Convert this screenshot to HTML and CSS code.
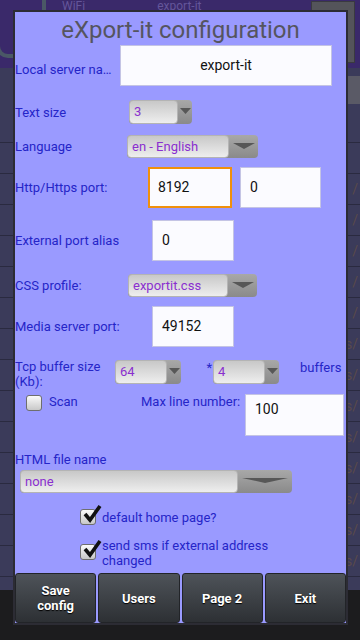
FILE: index.html
```html
<!DOCTYPE html>
<html lang="en">
<head>
  <meta charset="UTF-8">
  <meta name="viewport" content="width=device-width, initial-scale=1.0">
  <title>eXport-it configuration</title>
  <link rel="stylesheet" href="styles.css">
</head>
<body>
  <!-- dimmed app behind the dialog -->
  <div class="screen">
    <div class="app-bar">
      <div class="app-icon"></div>
      <div class="app-titles">
        <span class="app-sub">WiFi</span>
        <span class="app-name">export-it</span>
      </div>
      <div class="app-btn"></div>
    </div>
    <div class="app-list">
      <div class="app-pill-row"><span class="app-pill">p</span></div>
      <div class="app-row"></div>
      <div class="app-row"></div>
      <div class="app-row"><span>/</span></div>
      <div class="app-row"><span>/</span></div>
      <div class="app-row"><span>/</span></div>
      <div class="app-row"><span>/</span></div>
      <div class="app-row"><span>/</span></div>
      <div class="app-row"><span>s/</span></div>
      <div class="app-row"><span>s/</span></div>
      <div class="app-row"><span>s/</span></div>
      <div class="app-row"><span>s/</span></div>
      <div class="app-row"><span>s/</span></div>
      <div class="app-row"><span>s/</span></div>
      <div class="app-row"><span>s/</span></div>
      <div class="app-row"><span>s/</span></div>
    </div>
    <div class="app-foot">
      <span>service</span>
      <span>service</span>
    </div>
  </div>

  <!-- configuration dialog -->
  <div class="dialog">
    <h1 class="dlg-title">eXport-it configuration</h1>

    <div class="row row-name">
      <span class="label lbl-name">Local server na…</span>
      <div class="field field-center w-name">export-it</div>
    </div>

    <div class="row row-size">
      <span class="label lbl-size">Text size</span>
      <div class="spin w-size">
        <span class="spin-val">3</span>
        <span class="spin-arrow">
          <svg viewBox="0 0 12 6" preserveAspectRatio="none"><polygon points="0 0, 12 0, 6 6" /></svg>
        </span>
      </div>
    </div>

    <div class="row row-lang">
      <span class="label lbl-lang">Language</span>
      <div class="spin w-lang">
        <span class="spin-val">en - English</span>
        <span class="spin-arrow arrow-wide">
          <svg viewBox="0 0 12 6" preserveAspectRatio="none"><polygon points="0 0, 12 0, 6 6" /></svg>
        </span>
      </div>
    </div>

    <div class="row row-http">
      <span class="label lbl-http">Http/Https port:</span>
      <div class="field field-focus w-http">8192</div>
      <div class="field w-https">0</div>
    </div>

    <div class="row row-ext">
      <span class="label lbl-ext">External port alias</span>
      <div class="field w-port">0</div>
    </div>

    <div class="row row-css">
      <span class="label lbl-css">CSS profile:</span>
      <div class="spin w-css">
        <span class="spin-val">exportit.css</span>
        <span class="spin-arrow arrow-wide">
          <svg viewBox="0 0 12 6" preserveAspectRatio="none"><polygon points="0 0, 12 0, 6 6" /></svg>
        </span>
      </div>
    </div>

    <div class="row row-media">
      <span class="label lbl-ext">Media server port:</span>
      <div class="field w-port">49152</div>
    </div>

    <div class="row row-tcp">
      <span class="label lbl-tcp">Tcp buffer size (Kb):</span>
      <div class="spin w-tcp">
        <span class="spin-val">64</span>
        <span class="spin-arrow">
          <svg viewBox="0 0 12 6" preserveAspectRatio="none"><polygon points="0 0, 12 0, 6 6" /></svg>
        </span>
      </div>
      <span class="label times">*</span>
      <div class="spin w-tcp">
        <span class="spin-val">4</span>
        <span class="spin-arrow">
          <svg viewBox="0 0 12 6" preserveAspectRatio="none"><polygon points="0 0, 12 0, 6 6" /></svg>
        </span>
      </div>
      <span class="label buffers">buffers</span>
    </div>

    <div class="row row-scan">
      <span class="cb cb-scan"></span>
      <span class="label lbl-scan">Scan</span>
      <span class="label lbl-max">Max line number:</span>
      <div class="field w-max">100</div>
    </div>

    <div class="label lbl-html">HTML file name</div>
    <div class="row row-html">
      <div class="spin w-html">
        <span class="spin-val">none</span>
        <span class="spin-arrow arrow-html">
          <svg viewBox="0 0 12 6" preserveAspectRatio="none"><polygon points="0 0, 12 0, 6 6" /></svg>
        </span>
      </div>
    </div>

    <div class="row row-check1">
      <span class="cb checked">
        <svg viewBox="0 0 20 20"><path d="M3 10 L8 16 L18 2" /></svg>
      </span>
      <span class="label">default home page?</span>
    </div>

    <div class="row row-check2">
      <span class="cb checked">
        <svg viewBox="0 0 20 20"><path d="M3 10 L8 16 L18 2" /></svg>
      </span>
      <span class="label lbl-sms">send sms if external address changed</span>
    </div>

    <div class="buttons">
      <button class="btn">Save<br>config</button>
      <button class="btn">Users</button>
      <button class="btn">Page 2</button>
      <button class="btn">Exit</button>
    </div>
  </div>
</body>
</html>
```

FILE: styles.css
```css
* {
  margin: 0;
  padding: 0;
  box-sizing: border-box;
}

body {
  width: 360px;
  height: 640px;
  overflow: hidden;
  font-family: Roboto, "Liberation Sans", sans-serif;
  background-color: #1e1e22;
  position: relative;
}

/* ---------- dimmed app in the background ---------- */

.screen {
  display: flex;
  flex-direction: column;
  height: 640px;
}

.app-bar {
  height: 68px;
  background-color: #3a296a;
  display: flex;
  align-items: flex-start;
}

.app-icon {
  width: 50px;
  height: 58px;
  margin-left: -4px;
  border: 4px solid #4a5866;
  border-top: none;
  border-radius: 0 0 12px 12px;
}

.app-titles {
  flex: 1;
  display: flex;
  gap: 72px;
  padding-left: 16px;
  color: #64569a;
  font-size: 12px;
  line-height: 12px;
}

.app-btn {
  width: 44px;
  height: 62px;
  margin: 1px 5px 0 0;
  background-color: #54545a;
  border: 1px solid #3a3a40;
}

.app-list {
  flex: 1;
  background-color: #3b3b5a;
  display: flex;
  flex-direction: column;
}

.app-pill-row {
  height: 44px;
  display: flex;
  justify-content: flex-end;
  align-items: center;
}

.app-pill {
  width: 30px;
  height: 28px;
  border-radius: 12px 0 0 12px;
  background-color: #5a5a66;
  color: #111133;
  font-size: 18px;
  line-height: 26px;
  padding-left: 8px;
}

.app-row {
  height: 31px;
  border-bottom: 1px solid #2a2a40;
  display: flex;
  justify-content: flex-end;
  align-items: center;
  padding-right: 2px;
  color: #5a4a4a;
  font-size: 14px;
}

.app-foot {
  height: 50px;
  background-color: #1c1c1e;
  display: flex;
  gap: 40px;
  padding: 0 0 0 160px;
  color: #3a3a3a;
  font-size: 13px;
  font-weight: bold;
  line-height: 10px;
}

/* ---------- dialog ---------- */

.dialog {
  position: absolute;
  left: 13px;
  top: 10px;
  width: 335px;
  height: 615px;
  background-color: #9a9aff;
  border: 2px solid #2c2c34;
  display: flex;
  flex-direction: column;
}

.dlg-title {
  height: 33px;
  font-size: 24px;
  font-weight: normal;
  color: #55555f;
  text-align: center;
  line-height: 37px;
}

.row {
  display: flex;
  align-items: center;
}

.label {
  font-size: 13px;
  color: #2525c8;
  white-space: nowrap;
}

.field {
  height: 41px;
  background-color: #fbfbff;
  border: 1px solid #c4c4e4;
  font-size: 14px;
  color: #111;
  line-height: 39px;
  padding-left: 9px;
}

.field-center {
  text-align: center;
  padding-left: 0;
}

.field-focus {
  border: 2px solid #f0900c;
  line-height: 37px;
  padding-left: 8px;
}

.spin {
  height: 23px;
  display: flex;
  background: linear-gradient(#a8a8a8, #8a8a8a);
  border-radius: 4px;
}

.spin-val {
  flex: 1;
  background: linear-gradient(#c8c8c8, #eeeeee);
  border: 1px solid #b4b4b4;
  border-radius: 4px;
  color: #8a2fcf;
  font-size: 13px;
  line-height: 21px;
  padding-left: 4px;
  white-space: nowrap;
}

.spin-arrow {
  width: 14px;
  display: flex;
  justify-content: center;
  padding-top: 8px;
}

.spin-arrow svg {
  width: 11px;
  height: 6px;
}

.spin-arrow polygon {
  fill: #575757;
}

.arrow-wide {
  width: 29px;
}

.arrow-wide svg {
  width: 22px;
  height: 6px;
}

.arrow-html {
  width: 54px;
}

.arrow-html svg {
  width: 46px;
  height: 5px;
}

/* row positions */

.row-name {
  height: 41px;
}

.lbl-name {
  width: 105px;
  padding-top: 8px;
}

.w-name {
  width: 212px;
}

.row-size {
  margin-top: 14px;
  height: 24px;
}

.lbl-size {
  width: 114px;
}

.w-size {
  width: 63px;
  height: 24px;
}

.row-lang {
  margin-top: 11px;
  height: 23px;
}

.lbl-lang {
  width: 112px;
}

.w-lang {
  width: 131px;
}

.row-http {
  margin-top: 9px;
  height: 41px;
  gap: 8px;
}

.lbl-http {
  width: 125px;
}

.w-http {
  width: 84px;
}

.w-https {
  width: 81px;
}

.row-ext {
  margin-top: 12px;
  height: 41px;
}

.lbl-ext {
  width: 137px;
}

.w-port {
  width: 82px;
}

.row-css {
  margin-top: 13px;
  height: 23px;
}

.lbl-css {
  width: 113px;
}

.w-css {
  width: 129px;
}

.row-media {
  margin-top: 9px;
  height: 41px;
}

.row-tcp {
  margin-top: 13px;
  height: 24px;
  align-items: flex-start;
}

.lbl-tcp {
  width: 100px;
  white-space: normal;
  line-height: 15px;
  margin-top: -1px;
}

.w-tcp {
  width: 66px;
  height: 24px;
}

.times {
  width: 32px;
  text-align: right;
  padding-right: 1px;
  line-height: 16px;
}

.buffers {
  margin-left: 21px;
  line-height: 15px;
}

.row-scan {
  margin-top: 10px;
  height: 42px;
  align-items: flex-start;
}

.cb {
  width: 16px;
  height: 16px;
  border: 1px solid #6e6e6e;
  border-radius: 3px;
  background: linear-gradient(#fafafa, #c8c8c8);
  position: relative;
  flex-shrink: 0;
}

.cb-scan {
  margin: 1px 0 0 11px;
}

.lbl-scan {
  width: 92px;
  margin-left: 7px;
  line-height: 16px;
}

.lbl-max {
  width: 104px;
  line-height: 16px;
}

.w-max {
  width: 99px;
  height: 42px;
  line-height: 28px;
}

.lbl-html {
  margin-top: 16px;
  line-height: 16px;
}

.row-html {
  margin-top: 2px;
  padding-left: 5px;
}

.w-html {
  width: 272px;
}

.checked svg {
  position: absolute;
  left: 1px;
  top: -6px;
  width: 20px;
  height: 20px;
}

.checked path {
  fill: none;
  stroke: #111;
  stroke-width: 3.6;
  stroke-linejoin: miter;
}

.row-check1 {
  margin-top: 16px;
  padding-left: 65px;
  gap: 6px;
}

.row-check2 {
  margin-top: 18px;
  padding-left: 65px;
  gap: 6px;
  align-items: flex-start;
}

.row-check2 .cb {
  margin-top: 1px;
}

.lbl-sms {
  white-space: normal;
  width: 180px;
  line-height: 15px;
  margin-top: -5px;
}

.buttons {
  margin-top: auto;
  height: 50px;
  display: flex;
  gap: 2px;
}

.btn {
  flex: 1;
  border: 1px solid #222428;
  border-radius: 3px;
  background: linear-gradient(#4e5359, #2d3034);
  color: #fff;
  font-family: Roboto, "Liberation Sans", sans-serif;
  font-size: 13px;
  font-weight: bold;
  line-height: 15px;
  text-shadow: 0 1px 1px #000;
}
```
